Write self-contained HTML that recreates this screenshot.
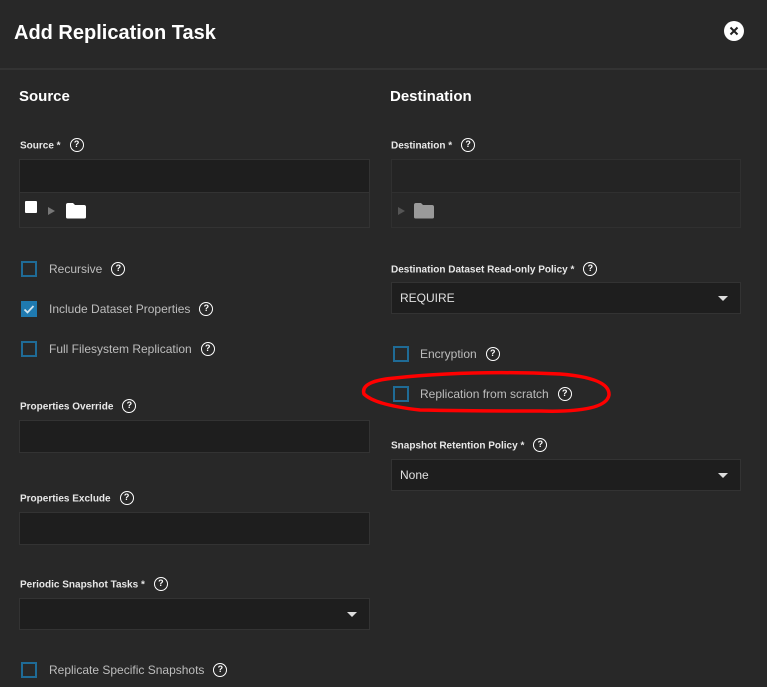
<!DOCTYPE html>
<html><head><meta charset="utf-8"><style>
*{margin:0;padding:0;box-sizing:border-box}
body{width:767px;height:687px;background:#282828;font-family:"Liberation Sans",sans-serif;position:relative;overflow:hidden;color:#fff}
.a{position:absolute}
.t{left:14px;top:22px;font-size:20px;font-weight:bold;color:#fff}
.h{font-size:15px;font-weight:bold;color:#fff}
.l{font-size:10px;font-weight:bold;color:#e8e8e8;line-height:12px;white-space:nowrap}
.q{display:inline-block;width:14px;height:14px;border:1.8px solid #fff;border-radius:50%;font-size:9px;font-weight:bold;text-align:center;line-height:11px;color:#fff;vertical-align:middle;margin-left:9px;margin-top:-2px}
.in{background:#1e1e1e;border:1px solid #333}
.tr{border:1px solid #333;border-top:none;background:#282828}
.cb{width:16px;height:16px;border:2px solid #1f6b96}
.ct{font-size:12px;color:#bdbdbd;white-space:nowrap;line-height:14px}
.sel{font-size:12px;color:#e0e0e0;padding-left:8px;line-height:31px}
.arr{position:absolute;right:12px;top:13px;width:0;height:0;border-left:5px solid transparent;border-right:5px solid transparent;border-top:5px solid #ddd}
</style></head><body>
<div class="a t">Add Replication Task</div>
<div class="a" style="top:21px;width:20px;height:20px;left:724px;border-radius:50%;background:#fff"></div>
<svg class="a" style="left:724px;top:21px" width="20" height="20"><path d="M6.5 6.5L13.5 13.5M13.5 6.5L6.5 13.5" stroke="#222" stroke-width="2"/></svg>
<div class="a" style="left:0;top:68px;width:767px;height:2px;background:#333"></div>

<div class="a h" style="left:19px;top:88px">Source</div>
<div class="a h" style="left:390px;top:88px">Destination</div>

<div class="a l" style="left:20px;top:140px">Source *<span class="q">?</span></div>
<div class="a in" style="left:19px;top:159px;width:351px;height:34px"></div>
<div class="a tr" style="left:19px;top:193px;width:351px;height:35px"></div>
<div class="a" style="left:25px;top:201px;width:12px;height:12px;background:#fff;border-radius:1px"></div>
<div class="a" style="left:48px;top:207px;border-top:4px solid transparent;border-bottom:4px solid transparent;border-left:7px solid #777"></div>
<svg class="a" style="left:65px;top:202px" width="22" height="17"><path d="M1 3Q1 1 3 1H8L10 3H19Q21 3 21 5V15Q21 16.5 19.5 16.5H2.5Q1 16.5 1 15Z" fill="#fff"/></svg>

<div class="a cb" style="left:21px;top:261px"></div><div class="a ct" style="left:49px;top:262px">Recursive<span class="q">?</span></div>
<div class="a" style="left:21px;top:301px;width:16px;height:16px;background:#1f7ab0"></div>
<svg class="a" style="left:21px;top:301px" width="16" height="16"><path d="M3.5 8.5L6.5 11.5L12.5 5" stroke="#cfe3ef" stroke-width="1.8" fill="none"/></svg>
<div class="a ct" style="left:49px;top:302px">Include Dataset Properties<span class="q">?</span></div>
<div class="a cb" style="left:21px;top:341px"></div><div class="a ct" style="left:49px;top:342px">Full Filesystem Replication<span class="q">?</span></div>

<div class="a l" style="left:20px;top:401px">Properties Override<span class="q">?</span></div>
<div class="a in" style="left:19px;top:420px;width:351px;height:33px"></div>
<div class="a l" style="left:20px;top:493px">Properties Exclude<span class="q">?</span></div>
<div class="a in" style="left:19px;top:512px;width:351px;height:33px"></div>
<div class="a l" style="left:20px;top:579px">Periodic Snapshot Tasks *<span class="q">?</span></div>
<div class="a in" style="left:19px;top:598px;width:351px;height:32px"><div class="arr"></div></div>
<div class="a cb" style="left:21px;top:662px"></div><div class="a ct" style="left:49px;top:663px">Replicate Specific Snapshots<span class="q">?</span></div>

<div class="a l" style="left:391px;top:140px">Destination *<span class="q">?</span></div>
<div class="a" style="left:391px;top:159px;width:350px;height:34px;background:#242424;border:1px solid #303030"></div>
<div class="a tr" style="left:391px;top:193px;width:350px;height:35px;border-color:#303030"></div>
<div class="a" style="left:398px;top:207px;border-top:4px solid transparent;border-bottom:4px solid transparent;border-left:7px solid #555"></div>
<svg class="a" style="left:413px;top:202px" width="22" height="17"><path d="M1 3Q1 1 3 1H8L10 3H19Q21 3 21 5V15Q21 16.5 19.5 16.5H2.5Q1 16.5 1 15Z" fill="#9a9a9a"/></svg>

<div class="a l" style="left:391px;top:264px">Destination Dataset Read-only Policy *<span class="q">?</span></div>
<div class="a in sel" style="left:391px;top:282px;width:350px;height:32px">REQUIRE<div class="arr"></div></div>
<div class="a cb" style="left:393px;top:346px"></div><div class="a ct" style="left:420px;top:347px">Encryption<span class="q">?</span></div>
<div class="a cb" style="left:393px;top:386px"></div><div class="a ct" style="left:420px;top:387px">Replication from scratch<span class="q">?</span></div>
<svg class="a" style="left:0;top:0" width="767" height="687"><path d="M395 378Q470 370 560 374Q610 378 609 395Q606 413 540 411Q470 411 420 410Q375 405 364 394Q360 381 395 378Z" fill="none" stroke="#f00" stroke-width="3.5"/></svg>
<div class="a l" style="left:391px;top:440px">Snapshot Retention Policy *<span class="q">?</span></div>
<div class="a in sel" style="left:391px;top:459px;width:350px;height:32px">None<div class="arr"></div></div>
</body></html>
